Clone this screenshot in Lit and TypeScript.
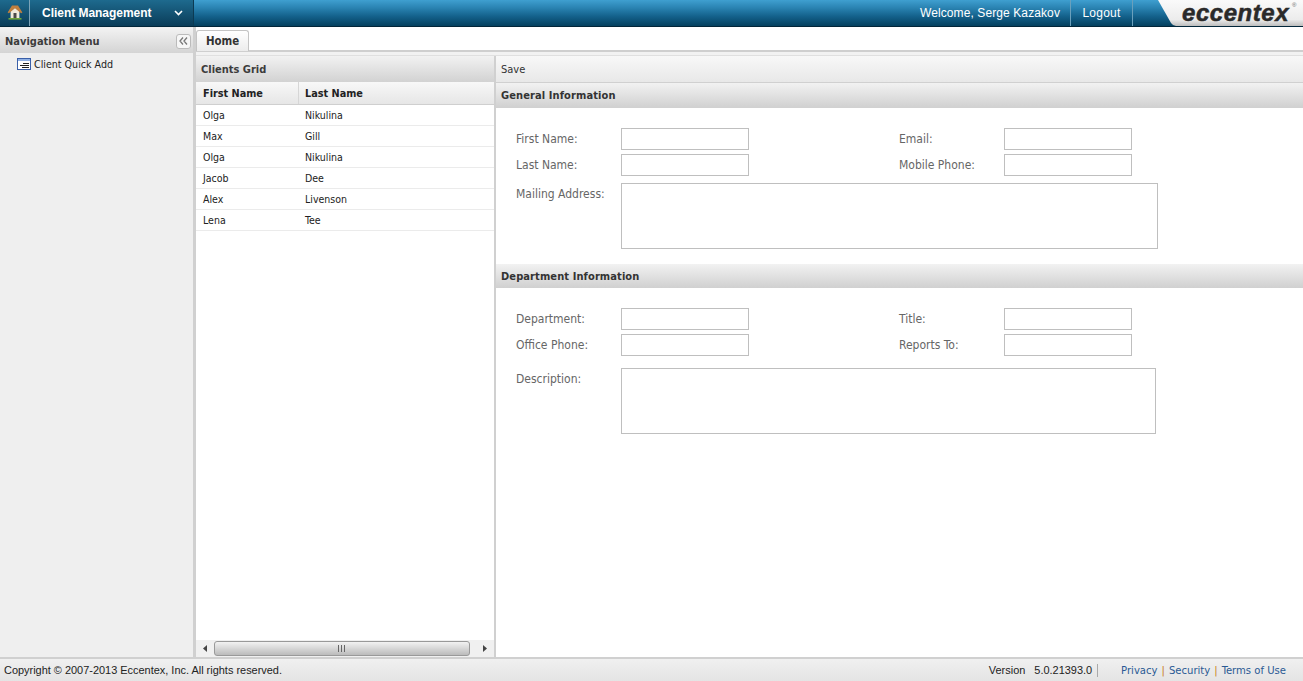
import { LitElement, html, css, svg } from "lit";
import { customElement } from "lit/decorators.js";

const clients = [
  ["Olga", "Nikulina"],
  ["Max", "Gill"],
  ["Olga", "Nikulina"],
  ["Jacob", "Dee"],
  ["Alex", "Livenson"],
  ["Lena", "Tee"],
];

const homeIcon = svg`<svg class="home" viewBox="0 0 16 16" width="16" height="16">
  <path d="M1.500 14.800h13" stroke="#6fa83c" stroke-width="1.600"/>
  <path d="M3.600 7.500v6.600h8.800V7.500L8 3.500z" fill="#f0eadb"/>
  <path d="M.6 8.600 5 1.500h6l4.400 7.100-1.300.6L8 4.300 1.900 9.200z" fill="#c07f3e"/>
  <rect x="6.500" y="9" width="3" height="5.100" fill="#4a4a4a"/>
</svg>`;

const formIcon = svg`<svg viewBox="0 0 14 12" width="14" height="12">
  <rect x=".5" y=".5" width="13" height="11" fill="#fff" stroke="#3a5fa8"/>
  <rect x="1" y="1" width="12" height="2" fill="#8fb0e4"/>
  <path d="M6 5.500h6M3 7.500h9M5 9.500h7" stroke="#222"/>
</svg>`;

@customElement("app-root")
export class AppRoot extends LitElement {
  static styles = css`
    :host { display: flex; flex-direction: column; width: 1303px; height: 681px; overflow: hidden;
      font-family: "Liberation Sans", Arial, sans-serif; font-size: 11px; color: #222; background: #fff; }
    .top { height: 26px; flex: none; display: flex; align-items: stretch; color: #fff; font-size: 12px;
      background: linear-gradient(#3f9fd0 0, #2a83b2 30%, #14628c 62%, #04405f 100%); border-bottom: 1px solid #02263a; }
    .home-cell { width: 29px; display: flex; align-items: center; justify-content: center; border-right: 1px solid #7ba3b8;
      background: linear-gradient(#1e6a8e, #0a3c58); }
    .home { margin-top: -2px; }
    .module { width: 164px; display: flex; align-items: center; justify-content: space-between; padding: 0 10px 1px 12px;
      box-sizing: border-box; font-weight: bold; letter-spacing: -.03px; border-right: 1px solid #0c3a52; background: linear-gradient(#1e6a8e, #0a3c58); }
    .spacer { flex: 1; }
    .welcome { padding: 0 10px 0 0; display: flex; align-items: center; border-right: 1px solid #6aa0bc; letter-spacing: .1px; }
    .logout { width: 61px; box-sizing: content-box; padding-left: 0; display: flex; align-items: center; justify-content: center; border-right: 1px solid #6aa0bc; letter-spacing: .25px; }
    .logo-wrap { width: 170px; position: relative; overflow: hidden; }
    .logo-bg { position: absolute; inset: 0; width: 100%; height: 100%; }
    .logo { position: absolute; left: 49px; top: 0; font: italic bold 24px/25px "Liberation Sans", sans-serif; color: #2a2a2a;
      -webkit-text-stroke: .5px #2a2a2a; letter-spacing: .55px; }
    .reg { position: absolute; left: 159px; top: 0; font: 6px/10px "Liberation Sans", sans-serif; color: #666; }

    .main { flex: 1; min-height: 0; display: flex; background: #d0d0d0; }
    .nav { width: 193px; flex: none; background: #efefef; }
    .nav-head { height: 25px; box-sizing: border-box; margin-top: 1px; display: flex; align-items: center; justify-content: space-between; padding: 1px 2px 0 5px;
      background: linear-gradient(#f2f2f2, #d4d4d4); font: bold 11px "DejaVu Sans Condensed", "Noto Sans", sans-serif; color: #3c3c3c; }
    .collapse { width: 13px; height: 13px; border: 1px solid #bbb; border-radius: 3px; background: #f6f6f6; display: flex; align-items: center; justify-content: center; }
    .nav-item { display: flex; align-items: center; gap: 3px; padding: 5px 0 0 17px; font: 10.6px "DejaVu Sans Condensed", "Noto Sans", sans-serif; color: #222; }

    .content { flex: 1; min-width: 0; margin-left: 3px; display: flex; flex-direction: column; background: #fff; }
    .tabs { height: 22px; flex: none; display: flex; align-items: flex-end; margin-top: 1px; border-bottom: 2px solid #cfcfcf; }
    .tab { width: 53px; height: 21px; box-sizing: border-box; border: 1px solid #c4c4c4; border-bottom: none; border-radius: 3px 3px 0 0;
      background: linear-gradient(#fff, #ececec); display: flex; align-items: center; justify-content: center;
      font: bold 11.4px "DejaVu Sans Condensed", sans-serif; color: #333; margin-bottom: -1px; }
    .strip { height: 3px; flex: none; background: #f2f2f2; border-bottom: 1px solid #e0e0e0; }
    .split { flex: 1; min-height: 0; display: flex; background: #d0d0d0; }

    .grid { width: 298px; flex: none; background: #fff; display: flex; flex-direction: column; }
    .panel-head { height: 26px; flex: none; box-sizing: border-box; display: flex; align-items: center; padding-left: 5px;
      background: linear-gradient(#f2f2f2, #d2d2d2); font: bold 11px "DejaVu Sans Condensed", sans-serif; color: #3c3c3c; }
    .cols { height: 23px; flex: none; display: flex; box-sizing: border-box; border-bottom: 1px solid #cfcfcf; background: linear-gradient(#f8f8f8, #e6e6e6); font: bold 10.8px "DejaVu Sans Condensed", sans-serif; color: #222; }
    .col1 { width: 103px; flex: none; padding-left: 7px; box-sizing: border-box; display: flex; align-items: center; border-right: 1px solid #d6d6d6; }
    .col2 { flex: 1; padding-left: 6px; display: flex; align-items: center; }
    .rows { flex: 1; min-height: 0; }
    .row { height: 21px; box-sizing: border-box; border-bottom: 1px solid #ebebeb; display: flex; align-items: center; font: 10.5px "DejaVu Sans Condensed", "Noto Sans", sans-serif; color: #222; }
    .c1 { width: 103px; padding-left: 7px; box-sizing: border-box; }
    .c2 { padding-left: 6px; }
    .hbar { height: 17px; flex: none; display: flex; align-items: center; background: #f0f0f0; }
    .arrow { width: 18px; flex: none; display: flex; justify-content: center; }
    .arrow.right { width: 24px; box-sizing: border-box; padding-left: 5px; }
    .thumb { flex: 1; height: 15px; box-sizing: border-box; border: 1px solid #999; border-radius: 3px; background: linear-gradient(#f2f2f2, #bbb);
      display: flex; align-items: center; justify-content: center; padding-right: 2px; }

    .form { flex: 1; min-width: 0; margin-left: 2px; background: #fff; display: flex; flex-direction: column; }
    .toolbar { height: 27px; flex: none; box-sizing: border-box; display: flex; align-items: center; padding-left: 5px; border-bottom: 1px solid #d0d0d0;
      background: linear-gradient(#f8f8f8, #e8e8e8); font: 11px "DejaVu Sans Condensed", "Noto Sans", sans-serif; color: #333; }
    .section { height: 25px; flex: none; box-sizing: border-box; display: flex; align-items: center; padding-left: 5px;
      background: linear-gradient(#f2f2f2, #d0d0d0); font: bold 11px "DejaVu Sans Condensed", sans-serif; letter-spacing: .1px; color: #333; }
    .section.dept { height: 24px; }
    .body { padding: 20px 0 0 20px; font: 12px "DejaVu Sans Condensed", "Noto Sans", sans-serif; color: #666; }
    .body.general { height: 156px; box-sizing: border-box; }
    .fields { display: grid; grid-template-columns: 105px 128px 150px 105px 128px; row-gap: 4px; }
    .label { height: 22px; line-height: 22px; }
    .input { height: 22px; box-sizing: border-box; border: 1px solid #bfbfbf; background: #fff; }
    .textrow { display: flex; margin-top: 7px; }
    .textrow.dept { margin-top: 12px; }
    .textrow .label { width: 105px; flex: none; }
    .area { height: 66px; box-sizing: border-box; border: 1px solid #bfbfbf; }

    .foot { height: 22px; flex: none; display: flex; align-items: center; border-top: 2px solid #d0d0d0; background: linear-gradient(#f0f0f0, #e4e4e4);
      padding: 0 17px 0 4px; font-size: 10.95px; color: #222; }
    .version { display: flex; gap: 9px; padding-right: 5px; border-right: 1px solid #aaa; margin-right: 23px; line-height: 13px; }
    .links { display: flex; gap: 4px; font: 11.2px "DejaVu Sans Condensed", "Noto Sans", sans-serif; color: #2a5a94; }
    .pipe { color: #c77a20; }
  `;

  render() {
    return html`
      <div class="top">
        <div class="home-cell">${homeIcon}</div>
        <div class="module"><span>Client Management</span>
          <svg viewBox="0 0 9 6" width="9" height="6"><path d="M1 1l3.500 3.500L8 1" fill="none" stroke="#fff" stroke-width="1.600"/></svg>
        </div>
        <div class="spacer"></div>
        <div class="welcome">Welcome, Serge Kazakov</div>
        <div class="logout">Logout</div>
        <div class="logo-wrap">
          <svg class="logo-bg" viewBox="0 0 170 26" preserveAspectRatio="none">
            <defs><linearGradient id="g" x1="0" y1="0" x2="0" y2="1"><stop offset="0" stop-color="#fafafa"/><stop offset=".75" stop-color="#ececec"/><stop offset="1" stop-color="#bdbdbd"/></linearGradient></defs>
            <path d="M25 0H170V26H43Q40 26 38 23z" fill="url(#g)"/>
          </svg>
          <span class="logo">eccentex</span><span class="reg">®</span>
        </div>
      </div>
      <div class="main">
        <div class="nav">
          <div class="nav-head"><span>Navigation Menu</span>
            <span class="collapse"><svg viewBox="0 0 9 8" width="9" height="8"><path d="M4 .5 1 4l3 3.500M8 .5 5 4l3 3.500" fill="none" stroke="#777" stroke-width="1.300"/></svg></span>
          </div>
          <div class="nav-item">${formIcon}<span>Client Quick Add</span></div>
        </div>
        <div class="content">
          <div class="tabs"><div class="tab">Home</div></div>
          <div class="strip"></div>
          <div class="split">
            <div class="grid">
              <div class="panel-head">Clients Grid</div>
              <div class="cols"><div class="col1">First Name</div><div class="col2">Last Name</div></div>
              <div class="rows">
                ${clients.map((c) => html`<div class="row"><span class="c1">${c[0]}</span><span class="c2">${c[1]}</span></div>`)}
              </div>
              <div class="hbar">
                <span class="arrow"><svg viewBox="0 0 5 7" width="5" height="7"><path d="M4 0v7L0 3.500z" fill="#444"/></svg></span>
                <div class="thumb"><svg viewBox="0 0 7 7" width="7" height="7"><path d="M.5 0v7M3.500 0v7M6.500 0v7" stroke="#666"/></svg></div>
                <span class="arrow right"><svg viewBox="0 0 5 7" width="5" height="7"><path d="M1 0v7l4-3.500z" fill="#444"/></svg></span>
              </div>
            </div>
            <div class="form">
              <div class="toolbar">Save</div>
              <div class="section">General Information</div>
              <div class="body general">
                <div class="fields">
                  <span class="label">First Name:</span><div class="input"></div><span></span><span class="label">Email:</span><div class="input"></div>
                  <span class="label">Last Name:</span><div class="input"></div><span></span><span class="label">Mobile Phone:</span><div class="input"></div>
                </div>
                <div class="textrow"><span class="label">Mailing Address:</span><div class="area" style="width:537px"></div></div>
              </div>
              <div class="section dept">Department Information</div>
              <div class="body">
                <div class="fields">
                  <span class="label">Department:</span><div class="input"></div><span></span><span class="label">Title:</span><div class="input"></div>
                  <span class="label">Office Phone:</span><div class="input"></div><span></span><span class="label">Reports To:</span><div class="input"></div>
                </div>
                <div class="textrow dept"><span class="label">Description:</span><div class="area" style="width:535px"></div></div>
              </div>
            </div>
          </div>
        </div>
      </div>
      <div class="foot">
        <span>Copyright © 2007-2013 Eccentex, Inc. All rights reserved.</span>
        <span class="spacer"></span>
        <span class="version"><span>Version</span><span>5.0.21393.0</span></span>
        <span class="links"><span>Privacy</span><span class="pipe">|</span><span>Security</span><span class="pipe">|</span><span>Terms of Use</span></span>
      </div>
    `;
  }
}
